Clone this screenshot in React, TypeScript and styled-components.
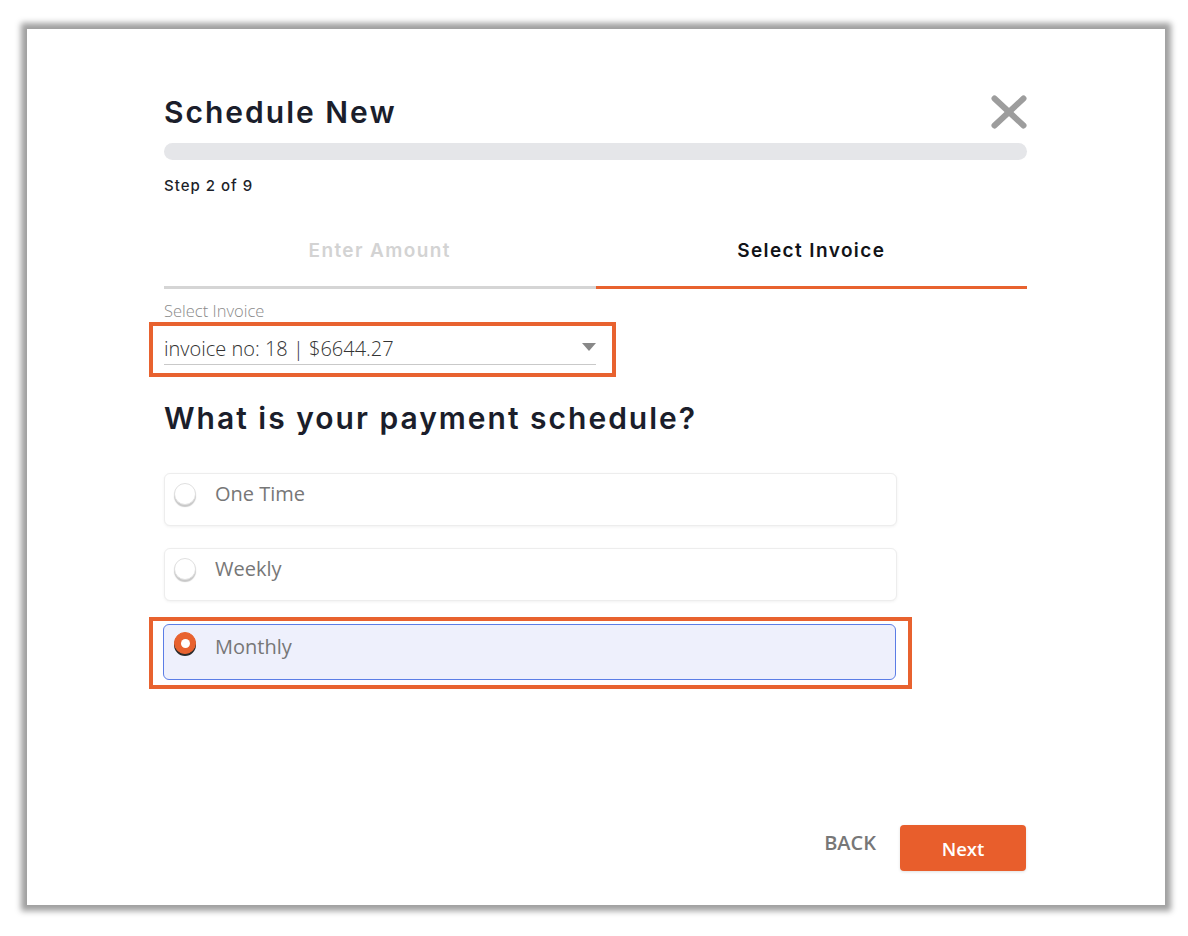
import React from "react";
import styled, { createGlobalStyle } from "styled-components";

const GlobalStyle = createGlobalStyle`
  html, body { margin: 0; padding: 0; background: #ffffff; }
  * { box-sizing: border-box; }
`;

const ORANGE = "#e8622f";

const Page = styled.div`
  padding: 29px 23px 31px 27px;
`;

const Card = styled.div`
  width: 1138px;
  height: 876px;
  background: #ffffff;
  box-shadow: 0 0 6px 6px rgba(0, 0, 0, 0.38);
  padding: 65px 138px 34px 137px;
  display: flex;
  flex-direction: column;
`;

const Header = styled.div`
  display: flex;
  align-items: center;
  justify-content: space-between;
  height: 36px;
`;

const Title = styled.h1`
  margin: 0;
  font-family: "Inter", "Noto Sans", sans-serif;
  font-weight: 600;
  font-size: 30px;
  line-height: 36px;
  letter-spacing: 2px;
  color: #1b1e2b;
`;

const CloseButton = styled.button`
  border: 0;
  background: none;
  padding: 0;
  width: 36px;
  height: 34px;
  cursor: pointer;
  display: flex;
`;

const Progress = styled.div`
  margin-top: 13px;
  height: 17px;
  border-radius: 9px;
  background: #e5e6e9;
`;

const StepText = styled.div`
  margin-top: 16px;
  font-family: "Inter", "Noto Sans", sans-serif;
  font-weight: 500;
  font-size: 15px;
  line-height: 20px;
  letter-spacing: 1px;
  color: #1d1f2a;
`;

const Tabs = styled.div`
  margin-top: 30px;
  display: grid;
  grid-template-columns: 1fr 1fr;
`;

const Tab = styled.div<{ $active?: boolean }>`
  text-align: center;
  padding: 12px 0 22px;
  border-bottom: 3px solid ${(p) => (p.$active ? ORANGE : "#d5d5d5")};
  font-family: "Inter", "Noto Sans", sans-serif;
  font-weight: 600;
  font-size: 19px;
  line-height: 26px;
  letter-spacing: 1.4px;
  color: ${(p) => (p.$active ? "#111318" : "#d3d3d3")};
`;

const FieldLabel = styled.div`
  margin-top: 12px;
  font-family: "Open Sans", sans-serif;
  font-weight: 300;
  font-size: 16.5px;
  line-height: 20px;
  color: #8a8a8a;
`;

const Highlight = styled.div<{ $w: number }>`
  margin-left: -15px;
  width: ${(p) => p.$w}px;
  border: 4px solid ${ORANGE};
`;

const SelectWrap = styled(Highlight)`
  margin-top: 1px;
  padding: 0 16px 8px 11px;
`;

const SelectField = styled.div`
  display: flex;
  align-items: center;
  justify-content: space-between;
  padding-top: 11px;
  padding-bottom: 3px;
  border-bottom: 1px solid #c9c9c9;
`;

const SelectValue = styled.span`
  font-family: "Open Sans", sans-serif;
  font-weight: 350;
  font-size: 20px;
  line-height: 24px;
  color: #333333;
`;

const Caret = styled.span`
  width: 0;
  height: 0;
  border-left: 7px solid transparent;
  border-right: 7px solid transparent;
  border-top: 8px solid #888888;
  margin-bottom: 4px;
`;

const Question = styled.h2`
  margin: 23px 0 0;
  font-family: "Inter", "Noto Sans", sans-serif;
  font-weight: 600;
  font-size: 30px;
  line-height: 36px;
  letter-spacing: 2px;
  color: #1b1e2b;
`;

const Options = styled.div`
  margin-top: 37px;
  display: flex;
  flex-direction: column;
`;

const OptionCard = styled.label<{ $selected?: boolean }>`
  width: 733px;
  height: ${(p) => (p.$selected ? 56 : 53)}px;
  display: flex;
  align-items: center;
  gap: 19px;
  padding: 0 0 ${(p) => (p.$selected ? 10 : 12)}px ${(p) => (p.$selected ? 10 : 9)}px;
  border-radius: 6px;
  border: 1px solid ${(p) => (p.$selected ? "#5b7de6" : "#ededed")};
  background: ${(p) => (p.$selected ? "#eef0fc" : "#ffffff")};
  box-shadow: ${(p) => (p.$selected ? "none" : "0 1px 3px rgba(0,0,0,0.06)")};
  cursor: pointer;
  & + & {
    margin-top: 22px;
  }
`;

const OptionWrap = styled(Highlight)`
  margin-top: 16px;
  padding: 3px 11px 5px 10px;
`;

const Radio = styled.span<{ $checked?: boolean }>`
  width: 22px;
  height: 22px;
  flex: none;
  border-radius: 50%;
  display: flex;
  align-items: center;
  justify-content: center;
  margin-bottom: ${(p) => (p.$checked ? 8 : 0)}px;
  background: ${(p) => (p.$checked ? ORANGE : "#ffffff")};
  border: 1px solid ${(p) => (p.$checked ? ORANGE : "#e0e0e0")};
  box-shadow: ${(p) =>
    p.$checked ? "0 2px 0 #2b2b2b" : "0 2px 1px rgba(0,0,0,0.22)"};
  &::after {
    content: "";
    display: ${(p) => (p.$checked ? "block" : "none")};
    width: 9px;
    height: 9px;
    border-radius: 50%;
    background: #ffffff;
  }
`;

const OptionText = styled.span`
  font-family: "Open Sans", sans-serif;
  font-size: 20px;
  line-height: 26px;
  color: #777777;
`;

const Footer = styled.div`
  margin-top: auto;
  display: flex;
  justify-content: flex-end;
  align-items: flex-start;
  gap: 24px;
  padding-right: 1px;
`;

const BackButton = styled.button`
  border: 0;
  background: none;
  padding: 0;
  height: 36px;
  line-height: 36px;
  font-family: "Open Sans", sans-serif;
  font-weight: 600;
  font-size: 20px;
  color: #777777;
  cursor: pointer;
`;

const NextButton = styled.button`
  width: 126px;
  height: 46px;
  border: 0;
  border-radius: 4px;
  background: #e85e2c;
  color: #ffffff;
  font-family: "Open Sans", sans-serif;
  font-weight: 600;
  font-size: 18.5px;
  box-shadow: 0 1px 3px rgba(0, 0, 0, 0.12);
  cursor: pointer;
`;

const CloseIcon = () => (
  <svg width="36" height="34" viewBox="0 0 36 34" aria-hidden>
    <g stroke="#9d9d9d" strokeWidth="6" strokeLinecap="round">
      <line x1="3.5" y1="3.5" x2="32.5" y2="30.5" />
      <line x1="32.5" y1="3.5" x2="3.5" y2="30.5" />
    </g>
  </svg>
);

export default function App() {
  return (
    <>
      <GlobalStyle />
      <Page>
        <Card>
          <Header>
            <Title>Schedule New</Title>
            <CloseButton aria-label="Close">
              <CloseIcon />
            </CloseButton>
          </Header>
          <Progress />
          <StepText>Step 2 of 9</StepText>
          <Tabs>
            <Tab>Enter Amount</Tab>
            <Tab $active>Select Invoice</Tab>
          </Tabs>
          <FieldLabel>Select Invoice</FieldLabel>
          <SelectWrap $w={467}>
            <SelectField>
              <SelectValue>invoice no: 18 | $6644.27</SelectValue>
              <Caret />
            </SelectField>
          </SelectWrap>
          <Question>What is your payment schedule?</Question>
          <Options>
            <OptionCard>
              <Radio />
              <OptionText>One Time</OptionText>
            </OptionCard>
            <OptionCard>
              <Radio />
              <OptionText>Weekly</OptionText>
            </OptionCard>
          </Options>
          <OptionWrap $w={763}>
            <OptionCard $selected>
              <Radio $checked />
              <OptionText>Monthly</OptionText>
            </OptionCard>
          </OptionWrap>
          <Footer>
            <BackButton>BACK</BackButton>
            <NextButton>Next</NextButton>
          </Footer>
        </Card>
      </Page>
    </>
  );
}
